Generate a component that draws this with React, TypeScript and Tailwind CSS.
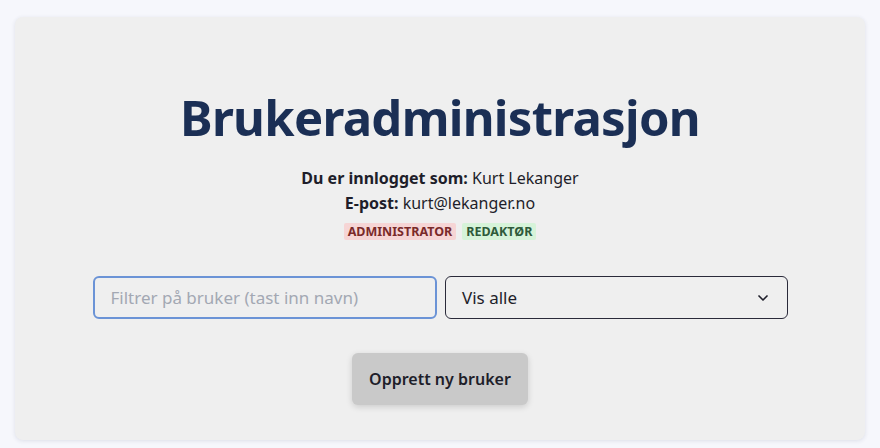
import { ChevronDown } from "lucide-react";

export default function App() {
  return (
    <div className="min-h-[448px] bg-[#f6f7fc] px-[15px] pt-[17px] font-['Noto_Sans',sans-serif] text-[#1e1e2a]">
      <div className="rounded-lg bg-[#efefef] px-6 pb-[35px] pt-[64px] shadow-[0_1px_4px_rgba(40,50,90,0.12)]">
        <h1 className="text-center text-[49px] font-bold leading-[72px] tracking-[-0.7px] text-[#1b2f55]">
          Brukeradministrasjon
        </h1>
        <div className="mt-[13px] flex flex-col items-center text-[16px] leading-[25px]">
          <p>
            <span className="font-bold">Du er innlogget som:</span> Kurt Lekanger
          </p>
          <p>
            <span className="font-bold">E-post:</span> kurt@lekanger.no
          </p>
          <div className="mt-[7px] flex gap-[6px]">
            <span className="rounded-[2px] bg-[#f6d5d5] px-1 text-[12.5px] font-bold leading-[17px] text-[#7a2a2a]">
              ADMINISTRATOR
            </span>
            <span className="rounded-[2px] bg-[#d6f3d9] px-1 text-[12.5px] font-bold leading-[17px] text-[#2e5a3a]">
              REDAKTØR
            </span>
          </div>
        </div>
        <div className="mx-auto mt-[36px] flex w-[695px] gap-2">
          <input
            autoFocus
            placeholder="Filtrer på bruker (tast inn navn)"
            className="h-[43px] flex-1 rounded-md border-2 border-[#6b93d6] bg-transparent px-[16px] text-[17px] text-[#1e1e2a] outline-none placeholder:text-[#a3a8b3]"
          />
          <div className="flex h-[43px] flex-1 items-center justify-between rounded-md border border-[#2a2a3a] px-[16px] text-[17px]">
            <span>Vis alle</span>
            <ChevronDown className="size-[16px]" strokeWidth={2.5} />
          </div>
        </div>
        <div className="mt-[34px] flex justify-center">
          <button className="h-[52px] rounded-md bg-[#c9c9c9] px-[17px] text-[16px] font-semibold text-[#1e1e2a] shadow-[0_2px_6px_rgba(0,0,0,0.15)]">
            Opprett ny bruker
          </button>
        </div>
      </div>
    </div>
  );
}
